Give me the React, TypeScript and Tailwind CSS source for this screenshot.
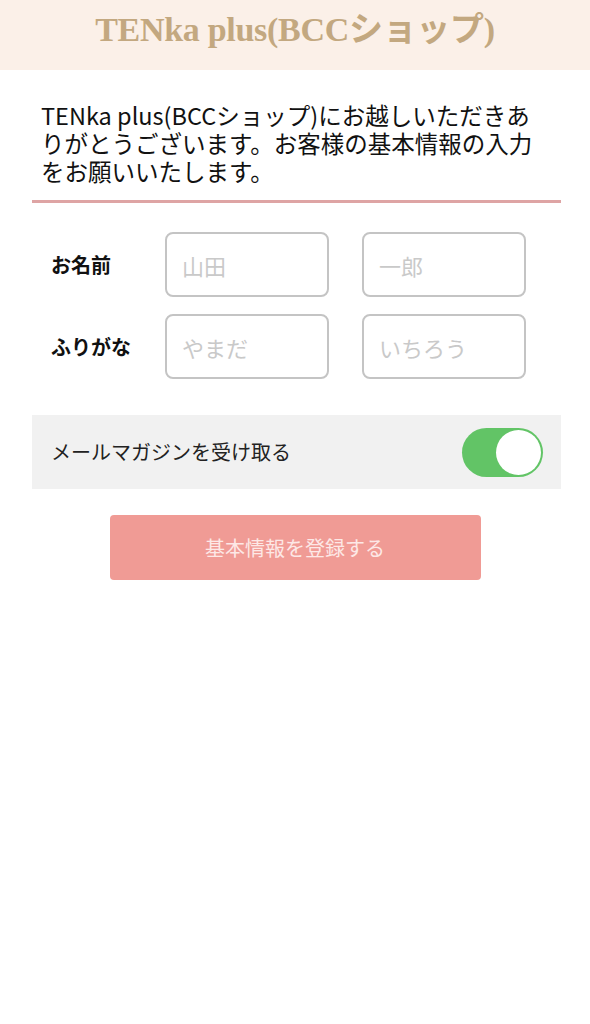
const jp = "font-['Noto_Sans_CJK_JP',sans-serif]";

function Field({ placeholder }: { placeholder: string }) {
  return (
    <input
      placeholder={placeholder}
      className="w-[164px] h-[65px] rounded-[8px] border-2 border-[#c4c4c4] pl-[15px] text-[22px] text-[#333] placeholder:text-[#c9c9c9] outline-none bg-white"
    />
  );
}

export default function App() {
  return (
    <div className={`min-h-screen bg-white ${jp}`}>
      <header className="h-[70px] bg-[#fbf0e8] flex items-center justify-center">
        <h1 className="font-['Liberation_Serif','Noto_Sans_CJK_JP',serif] font-bold text-[34px] leading-[40px] text-[#c3a880] tracking-[-0.3px] -mt-[11px]">
          TENka plus(BCCショップ)
        </h1>
      </header>

      <main className="pl-[32px] pr-[29px]">
        <p className="pt-[31px] pl-[9px] text-[23.5px] leading-[28px] text-[#111]">
          TENka plus(BCCショップ)にお越しいただきあ
          <br />
          りがとうございます。お客様の基本情報の入力
          <br />
          をお願いいたします。
        </p>

        <div className="mt-[15px] h-[3px] bg-[#dea4a4]" />

        <div className="mt-[29px] flex flex-col gap-[17px]">
          <div className="flex items-center">
            <span className="w-[133px] pl-[19px] text-[20px] font-bold text-[#111]">お名前</span>
            <div className="flex gap-[33px]">
              <Field placeholder="山田" />
              <Field placeholder="一郎" />
            </div>
          </div>
          <div className="flex items-center">
            <span className="w-[133px] pl-[19px] text-[20px] font-bold text-[#111]">ふりがな</span>
            <div className="flex gap-[33px]">
              <Field placeholder="やまだ" />
              <Field placeholder="いちろう" />
            </div>
          </div>
        </div>

        <div className="mt-[36px] h-[74px] bg-[#f1f1f1] flex items-center justify-between pl-[19px] pr-[18px]">
          <span className="text-[20px] text-[#222]">メールマガジンを受け取る</span>
          <div className="w-[81px] h-[49px] rounded-full bg-[#62c466] flex items-center justify-end pr-[2px]">
            <div className="w-[45px] h-[45px] rounded-full bg-white" />
          </div>
        </div>

        <div className="flex justify-center mt-[26px] pr-[3px]">
          <button className="w-[371px] h-[65px] rounded-[4px] bg-[#f09b95] text-[20px] text-[#fde8e6]">
            基本情報を登録する
          </button>
        </div>
      </main>
    </div>
  );
}
